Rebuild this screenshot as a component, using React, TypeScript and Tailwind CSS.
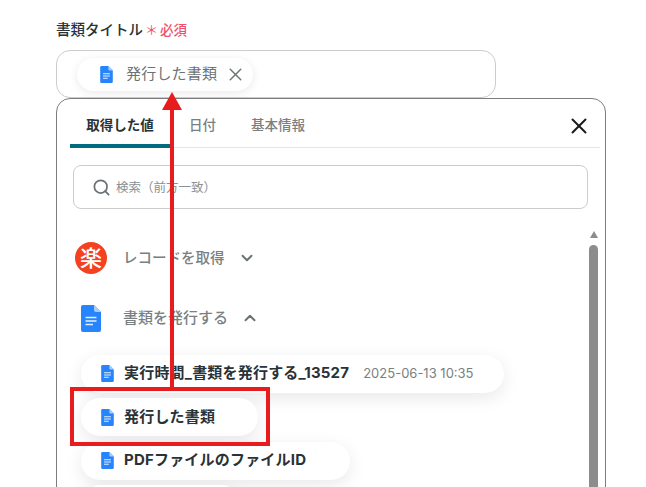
import { Search, X, ChevronDown, ChevronUp } from "lucide-react";

function DocIcon({ className }: { className: string }) {
  return (
    <svg viewBox="0 0 20 27" className={className}>
      <path d="M2 0H13L20 7V25a2 2 0 0 1-2 2H2a2 2 0 0 1-2-2V2a2 2 0 0 1 2-2z" fill="#2684fc" />
      <path d="M13 0L20 7H15a2 2 0 0 1-2-2z" fill="#a9cdfb" />
      <path d="M4.5 12.5H15.5M4.5 16H15.5M4.5 19.5H12" stroke="#e3eefe" strokeWidth="1.6" fill="none" />
    </svg>
  );
}

function ValueChip({ label, date, width }: { label: string; date?: string; width: string }) {
  return (
    <div className={`flex h-[38px] shrink-0 items-center rounded-full bg-white pl-5 shadow-[0_5px_18px_rgba(0,0,0,0.09)] ${width}`}>
      <DocIcon className="h-[17px] w-[13px] shrink-0" />
      <span className="ml-[10px] text-[15px] font-bold tracking-[0.2px] whitespace-nowrap text-[#283237]">{label}</span>
      {date && <span className="ml-[14px] text-[13px] whitespace-nowrap text-[#7a7f82]">{date}</span>}
    </div>
  );
}

export default function App() {
  return (
    <div className="relative h-[487px] w-[646px] overflow-hidden bg-white pt-[20px] pl-[56px] font-['Inter','Noto_Sans_CJK_JP',sans-serif]">
      <div className="flex h-[20px] items-center">
        <span className="text-[14.5px] font-medium text-[#283237]">書類タイトル</span>
        <span className="ml-[2px] text-[13px] leading-none text-[#f0506e]">＊</span>
        <span className="ml-[2px] text-[13.5px] font-medium text-[#f0506e]">必須</span>
      </div>

      {/* タイトル入力欄 */}
      <div className="mt-[10px] flex h-[48px] w-[440px] items-start rounded-[14px] border border-[#cccccc] pt-[7px] pl-[20px]">
        <div className="flex h-[33px] w-[176px] items-center rounded-full bg-white pl-[23px] shadow-[0_2px_10px_rgba(0,0,0,0.09)]">
          <DocIcon className="h-[17px] w-[13px] shrink-0" />
          <span className="ml-[13px] text-[15px] tracking-[0.2px] whitespace-nowrap text-[#6b7275]">発行した書類</span>
          <X className="ml-[8px] h-[21px] w-[21px] text-[#6b7275]" strokeWidth={1.7} />
        </div>
      </div>

      {/* 値の選択パネル */}
      <div className="h-[420px] w-[550px] rounded-t-[14px] border border-[#7d7d7d] pr-[5px] pl-[13px]">
        <div className="flex h-[49px] items-start border-b border-[#e6e6e6]">
          <div className="flex h-[49px] w-[100px] justify-center rounded-t-sm border-b-4 border-[#006a80] pt-[16px] text-[13.5px] font-bold text-[#283237]">
            取得した値
          </div>
          <span className="ml-[19px] pt-[16px] text-[13.5px] font-medium text-[#7a7f82]">日付</span>
          <span className="ml-[35px] pt-[16px] text-[13.5px] font-medium text-[#7a7f82]">基本情報</span>
          <X className="mt-[14px] ml-auto mr-[8px] h-[26px] w-[26px] text-[#1a1a1a]" strokeWidth={1.8} />
        </div>

        <div className="mt-[17px] mr-[12px] ml-[3px] flex h-[44px] items-center rounded-[8px] border border-[#cccccc] pl-[18px]">
          <Search className="h-[19px] w-[19px] text-[#6b7275]" strokeWidth={2.2} />
          <span className="ml-[5px] pt-[2px] text-[12.5px] text-[#8a9094]">検索（前方一致）</span>
        </div>

        <div className="mt-[19px] flex">
          <div className="flex w-[519px] shrink-0 flex-col">
            <div className="mt-[14px] flex h-[32px] items-center pl-[5px]">
              <div className="flex h-[32px] w-[32px] items-center justify-center rounded-full bg-[#f4411f] text-[22px] font-medium text-white">
                楽
              </div>
              <span className="ml-[16px] text-[14.5px] font-medium text-[#7a7f82]">レコードを取得</span>
              <ChevronDown className="ml-[13px] h-[18px] w-[18px] text-[#6b7275]" strokeWidth={2.6} />
            </div>
            <div className="mt-[28px] flex h-[32px] items-center pl-[11px]">
              <DocIcon className="h-[27px] w-[20px] shrink-0" />
              <span className="ml-[22px] text-[15px] font-medium text-[#7a7f82]">書類を発行する</span>
              <ChevronUp className="ml-[13px] h-[18px] w-[18px] text-[#6b7275]" strokeWidth={2.6} />
            </div>
            <div className="mt-[20px] flex flex-col gap-[5.5px] pl-[11px] pt-[0.5px]">
              <ValueChip label="実行時間_書類を発行する_13527" date="2025-06-13 10:35" width="w-[423px]" />
              <ValueChip label="発行した書類" width="w-[177px]" />
              <ValueChip label="PDFファイルのファイルID" width="w-[269px]" />
              <ValueChip label="" width="w-[160px]" />
            </div>
          </div>
          <div className="flex w-[9px] shrink-0 flex-col items-center pt-[3px]">
            <div className="h-0 w-0 border-x-[4.5px] border-b-[7px] border-x-transparent border-b-[#8c8c8c]" />
            <div className="mt-[7px] h-[260px] w-[9px] rounded-t-full bg-[#8c8c8c]" />
          </div>
        </div>
      </div>

      {/* 赤い注釈 */}
      <div className="absolute top-[387px] left-[70px] h-[59px] w-[200px] border-4 border-[#e81c1c]" />
      <div className="absolute top-[108px] left-[169.5px] h-[279px] w-[4.5px] bg-[#e81c1c]" />
      <div className="absolute top-[92px] left-[162px] h-0 w-0 border-x-[10px] border-b-[18px] border-x-transparent border-b-[#e81c1c]" />
    </div>
  );
}
